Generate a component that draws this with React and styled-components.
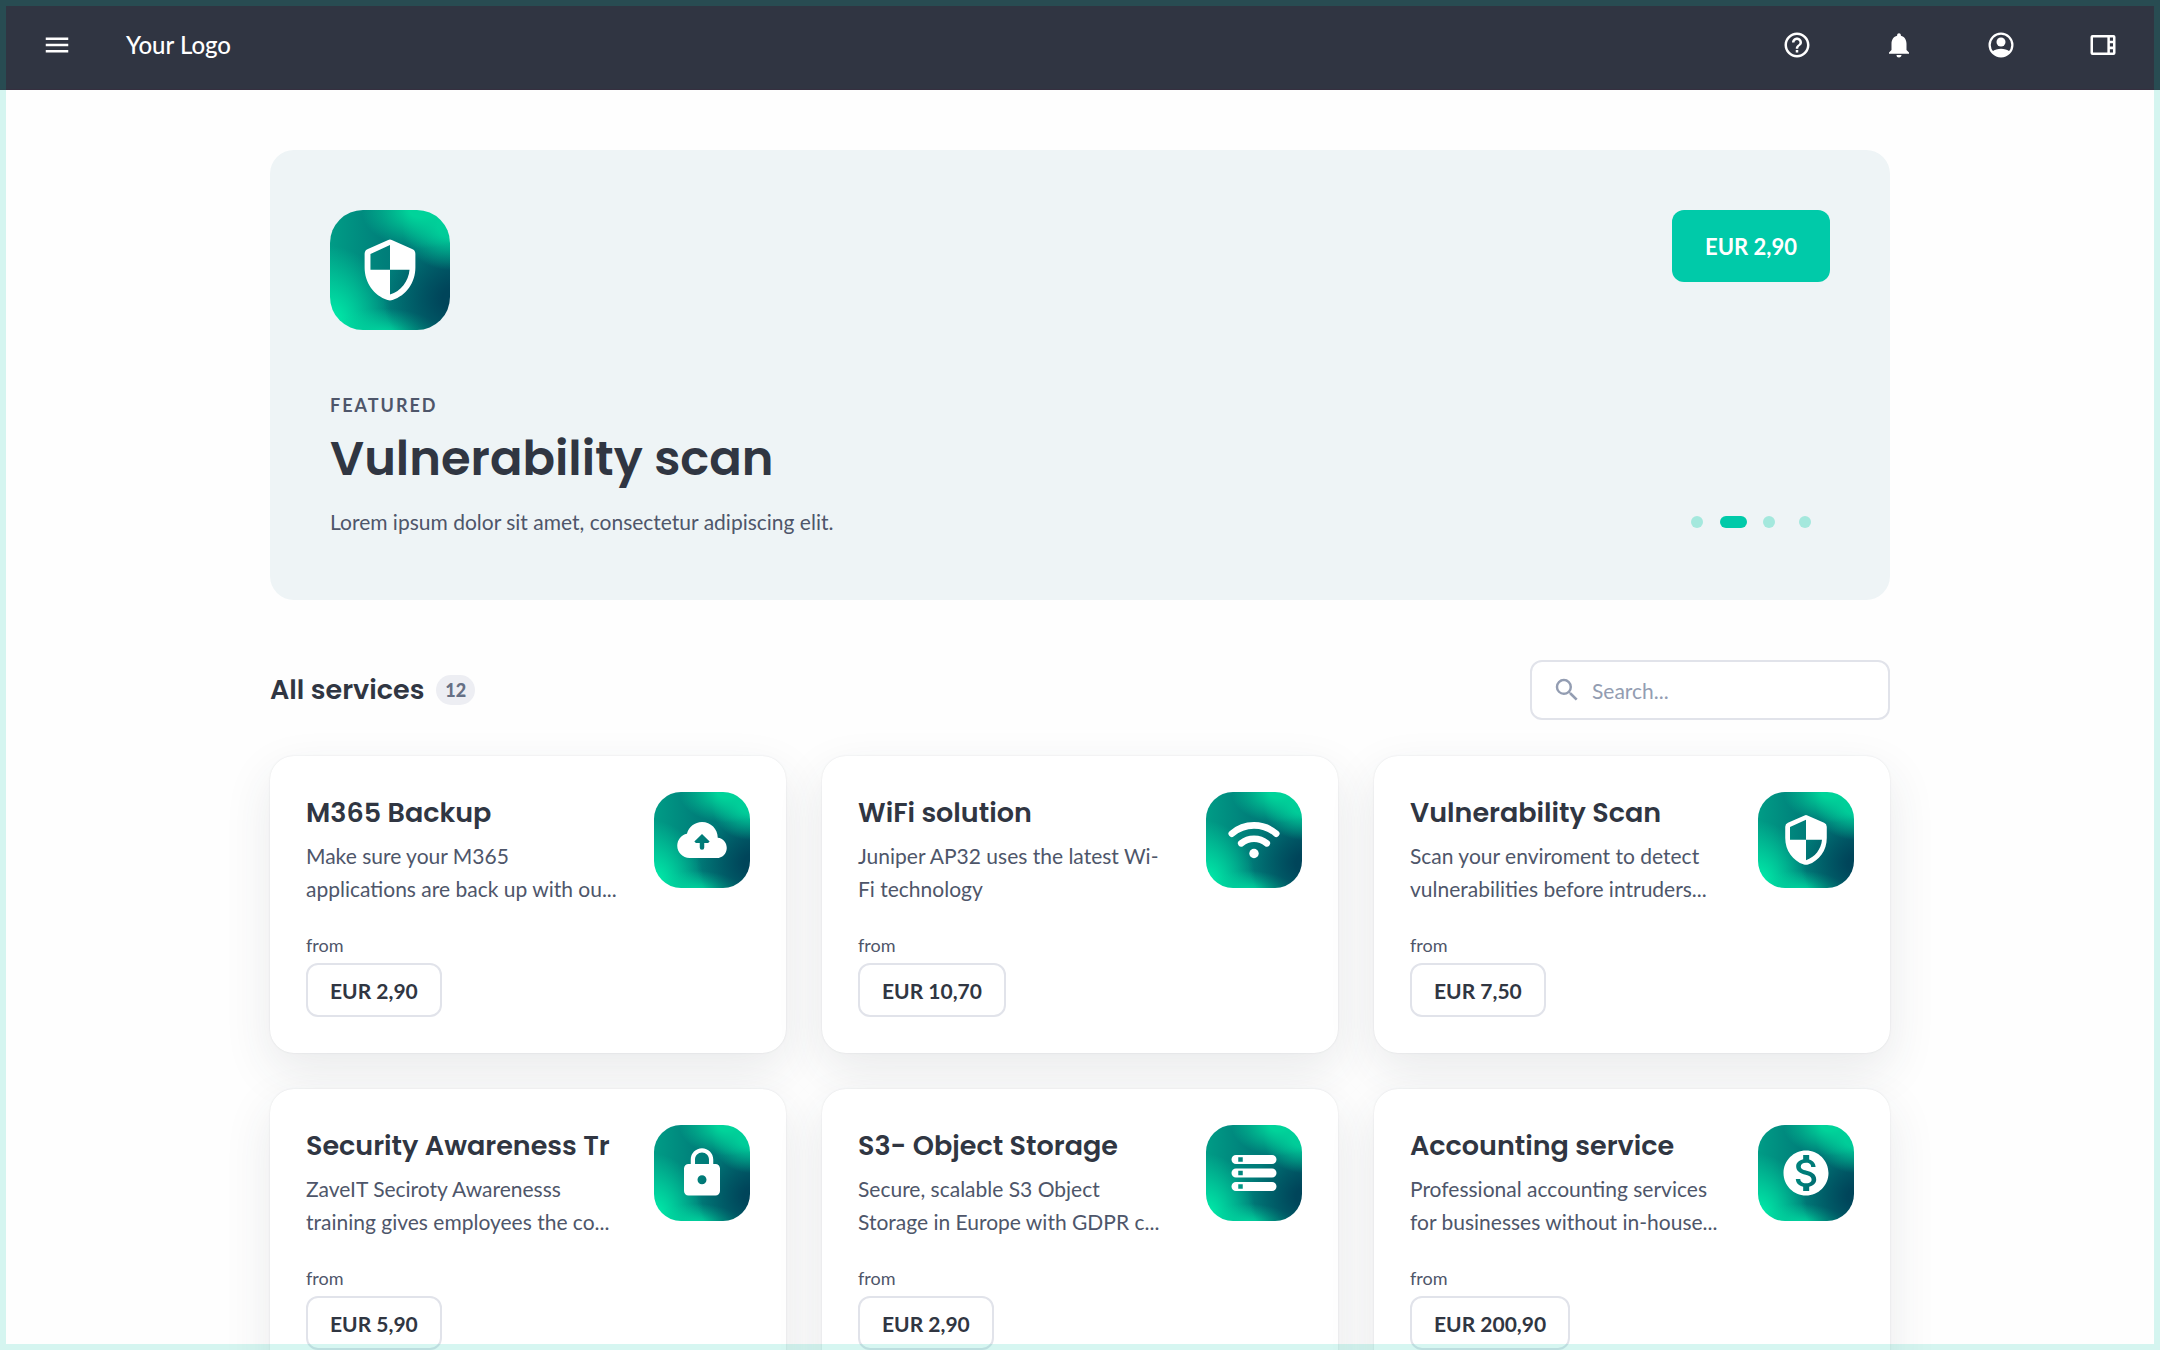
import { useState } from "react"
import styled, { createGlobalStyle } from "styled-components"
import {
  MdMenu,
  MdHelpOutline,
  MdNotifications,
  MdSearch,
  MdLock,
  MdMonetizationOn,
} from "react-icons/md"

const GlobalStyle = createGlobalStyle`
  * {
    box-sizing: border-box;
  }
  body {
    margin: 0;
    background: #fefefe;
    color: #303642;
    font-family: Lato, "Noto Sans", sans-serif;
    -webkit-font-smoothing: antialiased;
  }
  h1, h2, h3, p {
    margin: 0;
  }
  button, input {
    font-family: inherit;
  }
`

const Frame = styled.div`
  position: fixed;
  inset: 0;
  z-index: 10;
  border: 6px solid rgba(0, 202, 169, 0.16);
  pointer-events: none;
`

const TopBar = styled.header`
  display: flex;
  align-items: center;
  justify-content: space-between;
  height: 90px;
  padding: 0 27px;
  background: #303542;
  border-bottom: 1px solid #352f3f;
`

const BarGroup = styled.div`
  display: flex;
  align-items: center;
  gap: ${({ $gap }) => $gap}px;
`

const IconButton = styled.button`
  display: flex;
  align-items: center;
  justify-content: center;
  width: 60px;
  height: 60px;
  padding: 0;
  border: none;
  background: none;
  color: white;
  font-size: 30px;
  cursor: pointer;
`

const LogoLink = styled.a`
  color: white;
  font-size: 24px;
  font-weight: 500;
  text-decoration: none;
`

const Page = styled.main`
  max-width: 1692px;
  margin: 0 auto;
  padding: 60px 36px;
`

const Hero = styled.section`
  display: flex;
  justify-content: space-between;
  min-height: 450px;
  padding: 60px;
  border-radius: 24px;
  background: #eef4f6;
`

const HeroSide = styled.div`
  display: flex;
  flex-direction: column;
  align-items: center;
  justify-content: space-between;
`

const Tile = styled.div`
  display: flex;
  flex-shrink: 0;
  align-items: center;
  justify-content: center;
  width: ${({ $large }) => ($large ? 120 : 96)}px;
  height: ${({ $large }) => ($large ? 120 : 96)}px;
  border-radius: ${({ $large }) => ($large ? 33 : 27)}px;
  color: white;
  font-size: ${({ $large }) => ($large ? 66 : 54)}px;
  background:
    radial-gradient(ellipse 50% 32% at 76% 0%, #00d39a 20%, rgba(0, 211, 154, 0) 100%),
    radial-gradient(ellipse 40% 36% at 100% 14%, #00c898 25%, rgba(0, 200, 152, 0) 100%),
    radial-gradient(ellipse 62% 52% at 106% 74%, #00455a 20%, rgba(0, 69, 90, 0) 100%),
    radial-gradient(ellipse 50% 22% at 44% 104%, #00d59e 10%, rgba(0, 213, 158, 0) 100%),
    radial-gradient(ellipse 52% 66% at 0% 96%, #00eaa8 10%, rgba(0, 234, 168, 0) 100%),
    linear-gradient(90deg, #009c86 0%, #007f7a 45%, #006d72 100%);
`

const Eyebrow = styled.p`
  margin-top: 60px;
  color: #4e566a;
  font-size: 18px;
  font-weight: 700;
  line-height: 30px;
  letter-spacing: 2px;
  text-transform: uppercase;
`

const HeroTitle = styled.h1`
  margin-top: 3px;
  font-family: Poppins, Inter, sans-serif;
  font-size: 48px;
  font-weight: 600;
  line-height: 72px;
`

const HeroText = styled.p`
  margin-top: 12px;
  color: #4e566a;
  font-size: 21px;
  line-height: 30px;
`

const BuyButton = styled.button`
  height: 72px;
  padding: 0 33px;
  border: none;
  border-radius: 12px;
  background: #00caa9;
  color: white;
  font-size: 22px;
  font-weight: 700;
  cursor: pointer;
`

const Dots = styled.div`
  display: flex;
`

const Dot = styled.button`
  display: flex;
  align-items: center;
  justify-content: center;
  width: 36px;
  height: 36px;
  padding: 0;
  border: none;
  background: none;
  cursor: pointer;

  &::before {
    content: "";
    width: ${({ $active }) => ($active ? 27 : 12)}px;
    height: 12px;
    border-radius: 6px;
    background: ${({ $active }) => ($active ? "#00caa9" : "#a4e8dd")};
  }
`

const ListHeader = styled.div`
  display: flex;
  align-items: center;
  justify-content: space-between;
  margin: 60px 0 36px;
`

const ListTitle = styled.h2`
  display: flex;
  align-items: center;
  gap: 12px;
  font-family: Poppins, Inter, sans-serif;
  font-size: 27px;
  font-weight: 600;
`

const Count = styled.span`
  padding: 0 9px;
  border-radius: 15px;
  background: #edeef3;
  color: #667085;
  font-family: Lato, sans-serif;
  font-size: 18px;
  font-weight: 900;
  line-height: 30px;
`

const SearchBox = styled.label`
  display: flex;
  align-items: center;
  gap: 10px;
  width: 360px;
  height: 60px;
  padding: 0 20px;
  border: 2px solid #e1e3ea;
  border-radius: 12px;
  background: white;
  color: #939db2;
  font-size: 30px;
`

const SearchInput = styled.input`
  flex: 1;
  min-width: 0;
  padding: 0;
  border: none;
  outline: none;
  background: none;
  color: #303642;
  font-size: 21px;

  &::placeholder {
    color: #939db2;
    opacity: 1;
  }
`

const Grid = styled.div`
  display: grid;
  grid-template-columns: repeat(3, minmax(0, 1fr));
  gap: 36px;
`

const Card = styled.article`
  padding: 36px;
  border-radius: 24px;
  background: white;
  box-shadow:
    0 0 2px rgba(48, 54, 66, 0.12),
    0 18px 48px rgba(48, 54, 66, 0.1);
`

const CardTop = styled.div`
  display: flex;
  justify-content: space-between;
  gap: 36px;
`

const CardTitle = styled.h3`
  font-family: Poppins, Inter, sans-serif;
  font-size: 27px;
  font-weight: 600;
  line-height: 42px;
  white-space: nowrap;
`

const CardText = styled.p`
  margin-top: 5px;
  color: #4e566a;
  font-size: 21px;
  line-height: 33px;
`

const From = styled.p`
  margin: 25px 0 3px;
  color: #4e566a;
  font-size: 18px;
  line-height: 30px;
`

const PriceButton = styled.button`
  height: 54px;
  padding: 0 22px;
  border: 2px solid #e1e3ea;
  border-radius: 12px;
  background: white;
  color: #303642;
  font-size: 21px;
  font-weight: 700;
  cursor: pointer;
`

const AccountIcon = () => (
  <svg width="30" height="30" viewBox="0 0 24 24" fill="currentColor">
    <circle cx="12" cy="12" r="9.1" fill="none" stroke="currentColor" strokeWidth="1.8" />
    <circle cx="12" cy="9.6" r="3.6" />
    <path d="M5 17.2C7 15.8 9.4 15 12 15s5 .8 7 2.2A9.3 9.3 0 0 1 12 21.4a9.3 9.3 0 0 1-7-4.2z" />
  </svg>
)

const PanelIcon = () => (
  <svg width="30" height="30" viewBox="0 0 24 24" fill="currentColor" fillRule="evenodd">
    <path d="M3.6 4H20.4A1.6 1.6 0 0 1 22 5.6V18.4A1.6 1.6 0 0 1 20.4 20H3.6A1.6 1.6 0 0 1 2 18.4V5.6A1.6 1.6 0 0 1 3.6 4zM4 6V18H15.5V6zM17.5 6V8.5H20V6zM17.5 10.6V13.2H20V10.6zM17.5 15.4V18H20V15.4z" />
  </svg>
)

const ShieldIcon = () => (
  <svg width="1em" height="1em" viewBox="-1 -1 26 26" fill="currentColor" fillRule="evenodd">
    <path d="M11.3.15a1.8 1.8 0 0 1 1.4 0L20.7 3.7A2.1 2.1 0 0 1 22 5.6V11c0 6-3.6 11-9 12.8a3 3 0 0 1-2 0C5.6 22 2 17 2 11V5.6A2.1 2.1 0 0 1 3.3 3.7zM12 2.2L4.3 5.7V11.9H12zM12 11.9V21.7C16.3 20.3 19.3 16.5 19.7 11.9z" />
  </svg>
)

const CloudIcon = () => (
  <svg width="1em" height="1em" viewBox="0 0 24 24" fill="currentColor" fillRule="evenodd">
    <path d="M6.5 20C3.4 20 1 17.6 1 14.6c0-2.7 1.8-4.9 4.3-5.4C6.1 6.2 8.8 4 12 4c3.9 0 7 3.1 7 7 2.3.2 4 2.1 4 4.5 0 2.5-2 4.5-4.5 4.5zM12 9.3L8.6 12.7 9.3 13.3H11V15.3a1 1 0 0 0 2 0V13.3H14.7L15.4 12.7z" />
  </svg>
)

const WifiIcon = () => (
  <svg width="1em" height="1em" viewBox="0 0 24 24" fill="none" stroke="currentColor" strokeWidth="2.9" strokeLinecap="round">
    <path d="M2.1 9.2A15.1 15.1 0 0 1 21.9 9.2" />
    <path d="M6.3 13.5A9 9 0 0 1 17.7 13.5" />
    <circle cx="12" cy="18" r="2.1" fill="currentColor" stroke="none" />
  </svg>
)

const StorageIcon = () => (
  <svg width="1em" height="1em" viewBox="0 0 24 24" fill="currentColor" fillRule="evenodd">
    <path d="M4 4H20a2 2 0 0 1 0 4H4a2 2 0 0 1 0-4zM5 5V7H7V5z" />
    <path d="M4 10H20a2 2 0 0 1 0 4H4a2 2 0 0 1 0-4zM5 11V13H7V11z" />
    <path d="M4 16H20a2 2 0 0 1 0 4H4a2 2 0 0 1 0-4zM5 17V19H7V17z" />
  </svg>
)

const services = [
  { name: "M365 Backup", text: ["Make sure your M365", "applications are back up with ou..."], price: "2,90", icon: <CloudIcon /> },
  { name: "WiFi solution", text: ["Juniper AP32 uses the latest Wi-", "Fi technology"], price: "10,70", icon: <WifiIcon /> },
  { name: "Vulnerability Scan", text: ["Scan your enviroment to detect", "vulnerabilities before intruders..."], price: "7,50", icon: <ShieldIcon /> },
  { name: "Security Awareness Tr", text: ["ZaveIT Seciroty Awarenesss", "training gives employees the co..."], price: "5,90", icon: <MdLock /> },
  { name: "S3- Object Storage", text: ["Secure, scalable S3 Object", "Storage in Europe with GDPR c..."], price: "2,90", icon: <StorageIcon /> },
  { name: "Accounting service", text: ["Professional accounting services", "for businesses without in-house..."], price: "200,90", icon: <MdMonetizationOn /> },
]

const ServiceCard = ({ name, text, price, icon }) => (
  <Card>
    <CardTop>
      <div>
        <CardTitle>{name}</CardTitle>
        <CardText>
          {text[0]}
          <br />
          {text[1]}
        </CardText>
      </div>
      <Tile>{icon}</Tile>
    </CardTop>
    <From>from</From>
    <PriceButton>EUR {price}</PriceButton>
  </Card>
)

const App = () => {
  const [slide, setSlide] = useState(1)
  const [search, setSearch] = useState("")

  return (
    <>
      <GlobalStyle />
      <Frame />
      <TopBar>
        <BarGroup $gap={39}>
          <IconButton aria-label="Menu"><MdMenu /></IconButton>
          <LogoLink href="/">Your Logo</LogoLink>
        </BarGroup>
        <BarGroup $gap={42}>
          <IconButton aria-label="Help"><MdHelpOutline /></IconButton>
          <IconButton aria-label="Notifications"><MdNotifications /></IconButton>
          <IconButton aria-label="Account"><AccountIcon /></IconButton>
          <IconButton aria-label="Side panel"><PanelIcon /></IconButton>
        </BarGroup>
      </TopBar>
      <Page>
        <Hero>
          <div>
            <Tile $large><ShieldIcon /></Tile>
            <Eyebrow>Featured</Eyebrow>
            <HeroTitle>Vulnerability scan</HeroTitle>
            <HeroText>Lorem ipsum dolor sit amet, consectetur adipiscing elit.</HeroText>
          </div>
          <HeroSide>
            <BuyButton>EUR 2,90</BuyButton>
            <Dots>
              {[0, 1, 2, 3].map((i) => (
                <Dot key={i} $active={i === slide} aria-label={`Slide ${i + 1}`} onClick={() => setSlide(i)} />
              ))}
            </Dots>
          </HeroSide>
        </Hero>
        <ListHeader>
          <ListTitle>
            All services <Count>12</Count>
          </ListTitle>
          <SearchBox>
            <MdSearch />
            <SearchInput
              aria-label="Search services"
              placeholder="Search..."
              value={search}
              onChange={(e) => setSearch(e.target.value)}
            />
          </SearchBox>
        </ListHeader>
        <Grid>
          {services
            .filter((s) => s.name.toLowerCase().includes(search.toLowerCase()))
            .map((s) => (
              <ServiceCard key={s.name} {...s} />
            ))}
        </Grid>
      </Page>
    </>
  )
}

export default App
